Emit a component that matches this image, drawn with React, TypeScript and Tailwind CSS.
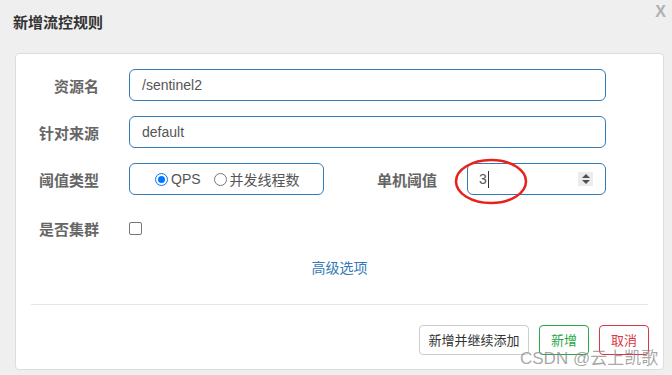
import React from "react";

const cjk = "font-['Microsoft_YaHei','Noto_Sans_CJK_SC',sans-serif]";

function Label({ children, className = "" }: { children: React.ReactNode; className?: string }) {
  return (
    <label className={`text-[15px] font-bold text-[#666] text-right leading-none ${className}`}>
      {children}
    </label>
  );
}

export default function App() {
  return (
    <div className={`relative w-[672px] h-[375px] bg-[#efefef] overflow-hidden ${cjk}`}>
      {/* header */}
      <div className="h-[53px] flex items-start justify-between pl-[13px] pr-[6px]">
        <h3 className="mt-[13px] text-[15px] font-semibold text-[#333] leading-[18px]">新增流控规则</h3>
        <span className="mt-[2px] text-[16px] leading-[20px] font-bold text-[#b0b0b0] font-['Liberation_Sans',sans-serif]">
          X
        </span>
      </div>

      {/* body */}
      <div className="ml-[15px] w-[649px] h-[317px] bg-white border border-[#ddd] rounded-[4px] flex flex-col pt-[15px]">
        {/* 资源名 */}
        <div className="flex items-center h-[32px]">
          <Label className="w-[83px]">资源名</Label>
          <div className="ml-[30px] w-[477px] h-[32px] border border-[#337ab7] rounded-[6px] flex items-center px-[12px]">
            <span className="text-[14px] text-[#555] font-['Liberation_Sans',sans-serif]">/sentinel2</span>
          </div>
        </div>

        {/* 针对来源 */}
        <div className="flex items-center h-[32px] mt-[15px]">
          <Label className="w-[83px]">针对来源</Label>
          <div className="ml-[30px] w-[477px] h-[32px] border border-[#337ab7] rounded-[6px] flex items-center px-[12px]">
            <span className="text-[14px] text-[#555] font-['Liberation_Sans',sans-serif]">default</span>
          </div>
        </div>

        {/* 阈值类型 / 单机阈值 */}
        <div className="flex items-center h-[32px] mt-[15px]">
          <Label className="w-[83px]">阈值类型</Label>
          <div className="ml-[30px] w-[195px] h-[32px] border border-[#337ab7] rounded-[6px] flex items-center pl-[25px] text-[14px] text-[#555]">
            <span className="w-[13px] h-[13px] rounded-full border-[1.5px] border-[#0075ff] flex items-center justify-center">
              <span className="w-[7px] h-[7px] rounded-full bg-[#0075ff]" />
            </span>
            <span className="ml-[3px] font-['Liberation_Sans',sans-serif]">QPS</span>
            <span className="ml-[13px] w-[13px] h-[13px] rounded-full border border-[#767676]" />
            <span className="ml-[3px]">并发线程数</span>
          </div>
          <Label className="ml-[51px] w-[62px]">单机阈值</Label>
          <div className="relative ml-[30px] w-[139px] h-[32px] border border-[#337ab7] rounded-[6px] flex items-center pl-[11px] pr-[12px]">
            <span className="text-[14px] text-[#555] font-['Liberation_Sans',sans-serif]">3</span>
            <span className="w-px h-[17px] bg-[#333] ml-[1px]" />
            <span className="ml-auto w-[15px] h-[14px] bg-[#ececec] flex flex-col items-center justify-center gap-[2px]">
              <svg width="8" height="4" viewBox="0 0 8 4"><path d="M0 4 L4 0 L8 4 Z" fill="#505050" /></svg>
              <svg width="8" height="4" viewBox="0 0 8 4"><path d="M0 0 L8 0 L4 4 Z" fill="#505050" /></svg>
            </span>
            {/* red annotation ellipse */}
            <svg
              className="absolute left-[-14px] top-[-6px] pointer-events-none"
              width="74"
              height="47"
              viewBox="0 0 74 47"
            >
              <ellipse cx="37" cy="23.5" rx="35" ry="21.5" fill="none" stroke="#e8221b" strokeWidth="2.5" />
            </svg>
          </div>
        </div>

        {/* 是否集群 */}
        <div className="flex items-center h-[32px] mt-[17px]">
          <Label className="w-[83px]">是否集群</Label>
          <span className="ml-[30px] w-[13px] h-[13px] border border-[#767676] rounded-[2px] bg-white" />
        </div>

        {/* 高级选项 */}
        <div className="mt-[13px] flex justify-center">
          <span className="text-[14px] text-[#337ab7] leading-[20px]">高级选项</span>
        </div>

        {/* divider */}
        <div className="mx-[15px] mt-[27px] border-t border-[#e5e5e5]" />

        {/* footer buttons */}
        <div className="flex justify-end gap-[10px] pr-[14px] mt-[20px] text-[13px]">
          <button className="w-[110px] h-[30px] border border-[#ccc] rounded-[4px] text-[#333] bg-white">
            新增并继续添加
          </button>
          <button className="w-[50px] h-[30px] border border-[#28a745] rounded-[4px] text-[#28a745] bg-white">
            新增
          </button>
          <button className="w-[50px] h-[30px] border border-[#dc3545] rounded-[4px] text-[#dc3545] bg-white">
            取消
          </button>
        </div>
      </div>

      {/* watermark */}
      <span className="absolute left-[520px] top-[346px] text-[17px] leading-[22px] text-[#8a8a8a]/75 pointer-events-none">
        <span className="font-['Liberation_Sans',sans-serif]">CSDN @</span>云上凯歌
      </span>
    </div>
  );
}
